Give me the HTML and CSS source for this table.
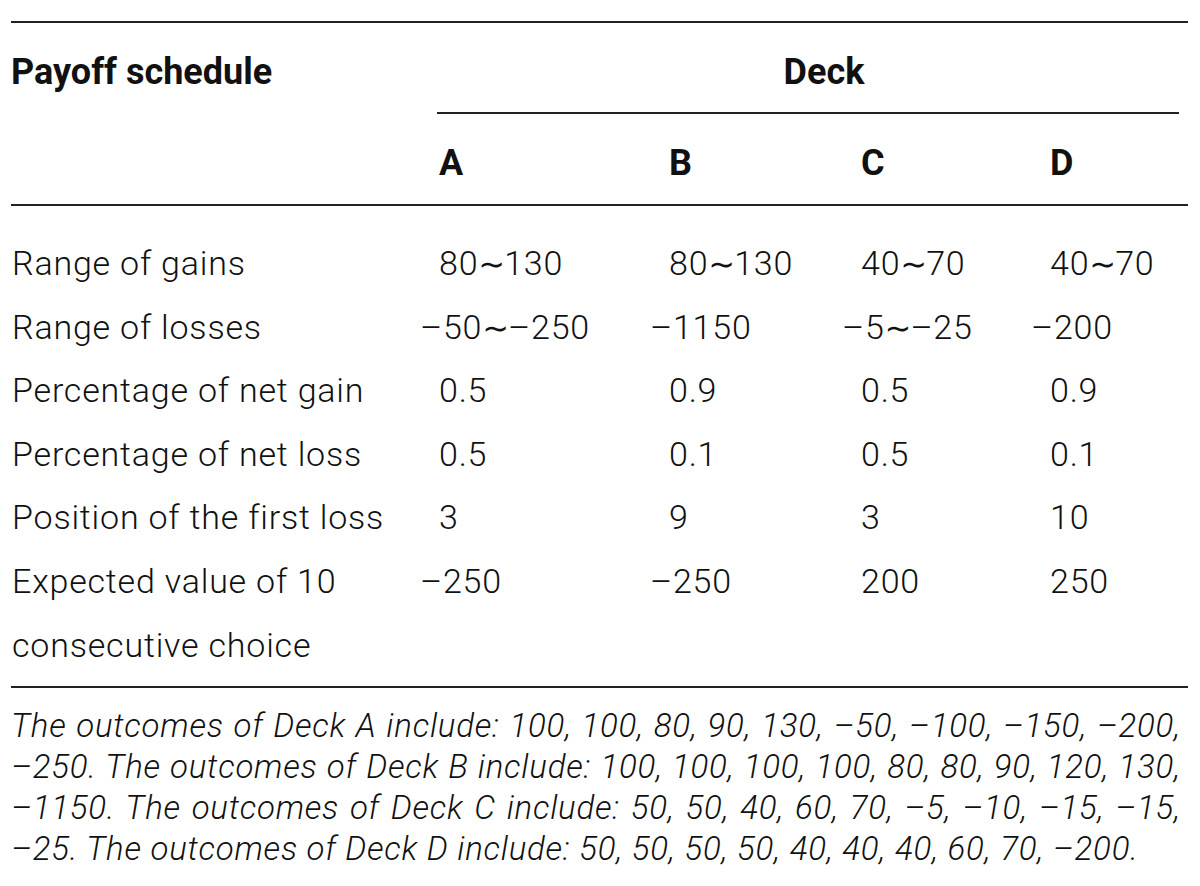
FILE: index.html
```html
<!DOCTYPE html>
<html lang="en">
<head>
<meta charset="utf-8">
<title>Payoff schedule</title>
<link rel="stylesheet" href="styles.css">
</head>
<body>
<div class="page">
  <table class="payoff">
    <colgroup>
      <col class="c-lbl">
      <col class="c-a">
      <col class="c-b">
      <col class="c-c">
      <col class="c-d">
    </colgroup>
    <thead>
      <tr class="r1">
        <th class="lbl">Payoff schedule</th>
        <th class="deck-cell" colspan="4"><div class="deck">Deck</div></th>
      </tr>
      <tr class="r2">
        <th class="lbl"></th>
        <th class="h">A</th>
        <th class="h">B</th>
        <th class="h">C</th>
        <th class="h">D</th>
      </tr>
    </thead>
    <tbody>
      <tr class="first">
        <td class="lbl">Range of gains</td>
        <td class="in">80<span class="tl">∼</span>130</td>
        <td class="in">80<span class="tl">∼</span>130</td>
        <td class="in">40<span class="tl">∼</span>70</td>
        <td class="in">40<span class="tl">∼</span>70</td>
      </tr>
      <tr>
        <td class="lbl">Range of losses</td>
        <td>–50<span class="tl">∼</span>–250</td>
        <td>–1150</td>
        <td>–5<span class="tl">∼</span>–25</td>
        <td>–200</td>
      </tr>
      <tr>
        <td class="lbl">Percentage of net gain</td>
        <td class="in">0.5</td>
        <td class="in">0.9</td>
        <td class="in">0.5</td>
        <td class="in">0.9</td>
      </tr>
      <tr>
        <td class="lbl">Percentage of net loss</td>
        <td class="in">0.5</td>
        <td class="in">0.1</td>
        <td class="in">0.5</td>
        <td class="in">0.1</td>
      </tr>
      <tr>
        <td class="lbl">Position of the first loss</td>
        <td class="in">3</td>
        <td class="in">9</td>
        <td class="in">3</td>
        <td class="in">10</td>
      </tr>
      <tr class="last">
        <td class="lbl">Expected value of 10 consecutive choice</td>
        <td>–250</td>
        <td>–250</td>
        <td class="in">200</td>
        <td class="in">250</td>
      </tr>
    </tbody>
  </table>
  <p class="note">
    <span class="ln">The outcomes of Deck A include: 100, 100, 80, 90, 130, –50, –100, –150, –200,</span>
    <span class="ln">–250. The outcomes of Deck B include: 100, 100, 100, 100, 80, 80, 90, 120, 130,</span>
    <span class="ln">–1150. The outcomes of Deck C include: 50, 50, 40, 60, 70, –5, –10, –15, –15,</span>
    <span class="ln end">–25. The outcomes of Deck D include: 50, 50, 50, 50, 40, 40, 40, 60, 70, –200.</span>
  </p>
</div>
</body>
</html>
```
FILE: styles.css
```css
body {
  margin: 0;
  background: #ffffff;
  color: #111111;
  font-family: Roboto, "Liberation Sans", "DejaVu Sans", sans-serif;
}

.page {
  margin: 21px 0 0 11px;
  width: 1177px;
}

.payoff {
  width: 1177px;
  table-layout: fixed;
  border-collapse: separate;
  border-spacing: 0;
  border-top: 2px solid #222222;
}

.c-lbl { width: 409px; }
.c-a { width: 230px; }
.c-b { width: 192px; }
.c-c { width: 189px; }
.c-d { width: 157px; }

.payoff th {
  font-size: 36px;
  font-weight: 700;
  line-height: 42px;
  text-align: left;
  padding: 0;
  vertical-align: top;
  white-space: nowrap;
}

.r1 th {
  padding-top: 28px;
}

.r1 .lbl {
  padding-bottom: 21px;
}

.deck {
  margin: 0 9px 0 17px;
  padding: 0 0 19px 32px;
  border-bottom: 2px solid #222222;
  text-align: center;
}

.r2 th {
  padding: 28px 0 20px;
  border-bottom: 2px solid #222222;
}

.r2 th.h {
  padding-left: 19px;
}

.payoff td {
  font-size: 34px;
  font-weight: 300;
  line-height: 63.6px;
  letter-spacing: 0.8px;
  padding: 0;
  vertical-align: top;
  white-space: nowrap;
}

.payoff td.lbl {
  white-space: normal;
  padding-left: 1px;
}

.payoff td.in {
  padding-left: 19px;
}

.first td {
  padding-top: 26px;
}

.last td {
  padding-bottom: 9px;
}

.tl {
  font-family: "DejaVu Sans", sans-serif;
  font-weight: 400;
  font-size: 32px;
  line-height: 0;
  letter-spacing: -1px;
}

.note {
  margin: 0;
  border-top: 2px solid #222222;
  padding: 17px 7px 0 0;
  font-style: italic;
  font-weight: 300;
  font-size: 33px;
  line-height: 41px;
  letter-spacing: 0.75px;
}

.note .ln {
  display: block;
  white-space: nowrap;
  text-align: justify;
  text-align-last: justify;
}

.note .ln.end {
  text-align-last: left;
}
```
